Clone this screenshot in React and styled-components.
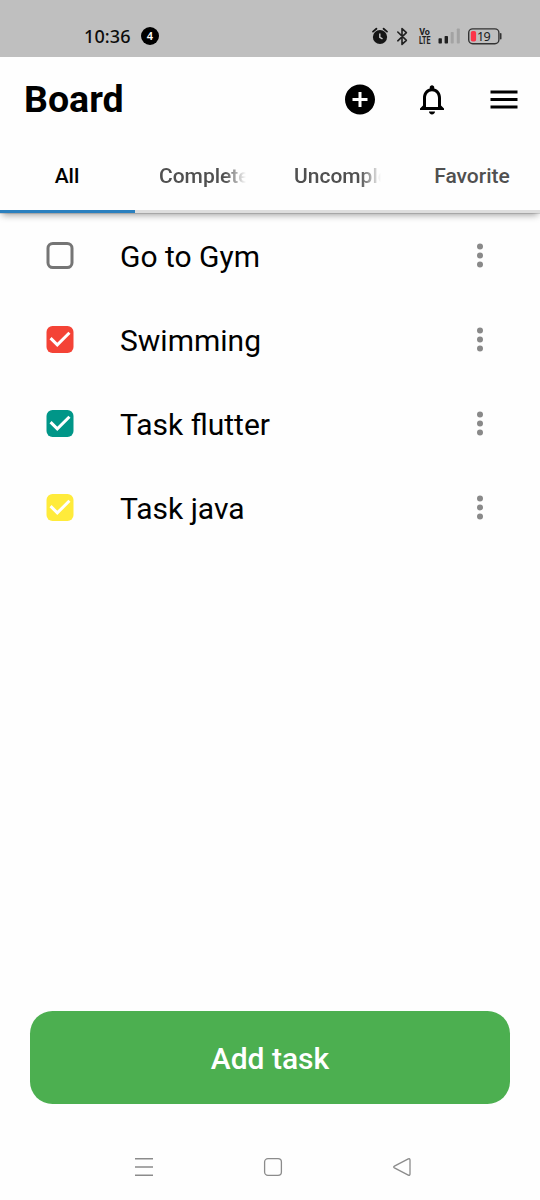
import React from "react";
import styled, { createGlobalStyle } from "styled-components";

const GlobalStyle = createGlobalStyle`
  * { box-sizing: border-box; }
  body { margin: 0; background: #fefefe; font-family: Roboto, "Liberation Sans", sans-serif; }
  button { font: inherit; border: 0; padding: 0; background: none; color: inherit; }
`;

const Screen = styled.div`
  width: 540px;
  height: 1200px;
  display: flex;
  flex-direction: column;
  background: #fefefe;
  overflow: hidden;
`;

const StatusBar = styled.div`
  height: 57px;
  flex: none;
  display: flex;
  align-items: flex-start;
  justify-content: space-between;
  padding: 24px 38px 0 84px;
  background: #bfbfbf;
  color: #0c0c0c;
`;

const StatusLeft = styled.div`
  display: flex;
  align-items: center;
  gap: 10px;
  height: 24px;
`;

const Clock = styled.span`
  font: 500 18px/24px "Noto Sans", sans-serif;
  letter-spacing: 0.1px;
  width: 47px;
  white-space: nowrap;
`;

const CountBadge = styled.span`
  width: 18px;
  height: 18px;
  border-radius: 50%;
  background: #000;
  color: #fff;
  font: 600 11px/18px "Noto Sans", sans-serif;
  text-align: center;
`;

const StatusRight = styled.svg`
  display: block;
  width: 132px;
  height: 24px;
`;

const Header = styled.header`
  flex: none;
  display: flex;
  align-items: center;
  justify-content: space-between;
  height: 84px;
  padding: 0 18px 0 24px;
`;

const Title = styled.h1`
  margin: 0;
  font-size: 37.5px;
  line-height: 44px;
  font-weight: 700;
  color: #000;
`;

const Actions = styled.div`
  display: flex;
  gap: 36px;
`;

const IconButton = styled.button`
  width: 36px;
  height: 36px;
  svg { display: block; width: 36px; height: 36px; }
`;

const Tabs = styled.nav`
  flex: none;
  display: flex;
  height: 72px;
  background: #fefefe;
  box-shadow: 0 4px 7px -2px rgba(0, 0, 0, 0.38), 0 1px 0 rgba(0, 0, 0, 0.12);
  clip-path: inset(0 0 -16px 0);
`;

const Tab = styled.button`
  width: 135px;
  height: 72px;
  padding: 1px 24px 0;
  display: flex;
  align-items: center;
  justify-content: ${(p) => (p.$fade ? "flex-start" : "center")};
  border-bottom: 3px solid ${(p) => (p.$active ? "#2b80bf" : "#dedede")};
  color: ${(p) => (p.$active ? "#000" : "#505050")};
`;

const TabLabel = styled.span`
  margin-left: ${(p) => (p.$fade ? "0" : "-1px")};
  font-size: 21px;
  line-height: 28px;
  font-weight: 500;
  white-space: nowrap;
  overflow: ${(p) => (p.$fade ? "hidden" : "visible")};
  mask-image: ${(p) => (p.$fade ? "linear-gradient(90deg, #000 66px, transparent 87px)" : "none")};
`;

const TaskList = styled.main`
  flex: 1;
`;

const TaskRow = styled.div`
  display: flex;
  align-items: center;
  height: 84px;
  padding: 0 42px;
`;

const Check = styled.span`
  flex: none;
  width: 36px;
  height: 36px;
  svg { display: block; }
`;

const TaskName = styled.span`
  flex: 1;
  margin: 3px 0 0 42px;
  font-size: 30px;
  line-height: 36px;
  color: #000;
`;

const MenuButton = styled.button`
  width: 36px;
  height: 36px;
  svg { display: block; }
`;

const AddButton = styled.button`
  flex: none;
  height: 93px;
  margin: 0 30px;
  padding-top: 2px;
  border-radius: 22.5px;
  background: #4caf50;
  color: #fff;
  font-size: 30px;
  font-weight: 500;
`;

const NavBar = styled.footer`
  flex: none;
  height: 96px;
  padding: 52px 127px 0 133px;
  display: flex;
  justify-content: space-between;
  svg { display: block; }
`;

const tasks = [
  { name: "Go to Gym" },
  { name: "Swimming", color: "#f44336" },
  { name: "Task flutter", color: "#009688" },
  { name: "Task java", color: "#ffeb3b" },
];

const tabs = [
  { label: "All", active: true },
  { label: "Completed", fade: true },
  { label: "Uncompleted", fade: true },
  { label: "Favorite" },
];

function StatusIcons() {
  return (
    <StatusRight viewBox="370 24 132 24">
      <circle cx="380" cy="37" r="7.1" fill="#161616" />
      <path d="M373 31.6l3.4-2.9M387 31.6l-3.4-2.9" stroke="#161616" strokeWidth="1.8" strokeLinecap="round" />
      <path d="M379.8 33.4v3.9l2.7 1.6" stroke="#c9c9c9" strokeWidth="1.4" fill="none" />
      <path d="M397.8 32l8.6 8.3-4.4 4.1V28.6l4.4 4.1-8.6 8.1" stroke="#202020" strokeWidth="1.6" fill="none" strokeLinejoin="round" strokeLinecap="round" />
      <g fontFamily="Roboto, sans-serif" fontWeight="700" fill="#202020">
        <text x="419.2" y="35.4" fontSize="9.4" textLength="10.7" lengthAdjust="spacingAndGlyphs">Vo</text>
        <text x="419" y="43.8" fontSize="10.4" textLength="11.5" lengthAdjust="spacingAndGlyphs">LTE</text>
      </g>
      <rect x="438.5" y="38.3" width="3.4" height="5.2" rx=".7" fill="#202020" />
      <rect x="444.6" y="36" width="3.4" height="7.5" rx=".7" fill="#202020" />
      <rect x="450.7" y="32" width="3" height="11.5" rx=".7" fill="#a3a3a3" />
      <rect x="456.8" y="28.5" width="3" height="15" rx=".7" fill="#a3a3a3" />
      <rect x="468.7" y="28.9" width="30.2" height="14.8" rx="4" fill="none" stroke="#333" strokeWidth="1.4" />
      <path d="M500.7 33.8v5" stroke="#333" strokeWidth="1.6" strokeLinecap="round" />
      <rect x="470.8" y="31" width="5.3" height="10.6" rx="1.8" fill="#fb3449" />
      <text x="477" y="40.9" fontFamily="Noto Sans, sans-serif" fontSize="12.6" fontWeight="400" fill="#202020" textLength="13.8">19</text>
    </StatusRight>
  );
}

function Checkbox({ color }) {
  return (
    <Check>
      <svg width="36" height="36" viewBox="0 -0.5 36 36">
        {color ? (
          <>
            <rect x="4.5" y="4.5" width="27" height="27" rx="6" fill={color} />
            <path d="M8.55 16.65L15.3 23.4L27.45 11.25" fill="none" stroke="#fff" strokeWidth="3" />
          </>
        ) : (
          <rect x="6" y="6" width="24" height="24" rx="4.8" fill="none" stroke="#757575" strokeWidth="3" />
        )}
      </svg>
    </Check>
  );
}

export default function App() {
  return (
    <>
      <GlobalStyle />
      <Screen>
        <StatusBar>
          <StatusLeft>
            <Clock>10:36</Clock>
            <CountBadge>4</CountBadge>
          </StatusLeft>
          <StatusIcons />
        </StatusBar>
        <Header>
          <Title>Board</Title>
          <Actions>
            <IconButton aria-label="Add">
              <svg viewBox="0 -0.333 24 24">
                <path d="M12 2C6.48 2 2 6.48 2 12s4.48 10 10 10 10-4.48 10-10S17.52 2 12 2zm5 11h-4v4h-2v-4H7v-2h4V7h2v4h4v2z" />
              </svg>
            </IconButton>
            <IconButton aria-label="Notifications">
              <svg viewBox="0 -0.333 24 24">
                <path d="M12 22c1.1 0 2-.9 2-2h-4c0 1.1.9 2 2 2zm6-6v-5c0-3.07-1.63-5.64-4.5-6.32V4c0-.83-.67-1.5-1.5-1.5s-1.5.67-1.5 1.5v.68C7.64 5.36 6 7.92 6 11v5l-2 2v1h16v-1l-2-2zm-2 1H8v-6c0-2.48 1.51-4.5 4-4.5s4 2.02 4 4.5v6z" />
              </svg>
            </IconButton>
            <IconButton aria-label="Menu">
              <svg viewBox="0 -0.333 24 24">
                <path d="M3 18h18v-2H3v2zm0-5h18v-2H3v2zm0-7v2h18V6H3z" />
              </svg>
            </IconButton>
          </Actions>
        </Header>
        <Tabs>
          {tabs.map((t) => (
            <Tab key={t.label} $active={t.active} $fade={t.fade}>
              <TabLabel $fade={t.fade}>{t.label}</TabLabel>
            </Tab>
          ))}
        </Tabs>
        <TaskList>
          {tasks.map((t) => (
            <TaskRow key={t.name}>
              <Checkbox color={t.color} />
              <TaskName>{t.name}</TaskName>
              <MenuButton aria-label="Options">
                <svg width="36" height="36" viewBox="0 -0.333 24 24" fill="#898989">
                  <circle cx="12" cy="6" r="2" />
                  <circle cx="12" cy="12" r="2" />
                  <circle cx="12" cy="18" r="2" />
                </svg>
              </MenuButton>
            </TaskRow>
          ))}
        </TaskList>
        <AddButton>Add task</AddButton>
        <NavBar>
          <svg width="22" height="22" viewBox="0 0 22 22" fill="none" stroke="#8b8b8b" strokeWidth="1.4">
            <path d="M2 2.7h18M2 11h18M2 19.2h18" />
          </svg>
          <svg width="22" height="22" viewBox="0 0 22 22" fill="none" stroke="#8b8b8b" strokeWidth="1.3">
            <rect x="2.6" y="2.6" width="16.8" height="16.8" rx="3.4" />
          </svg>
          <svg width="22" height="22" viewBox="0 0 22 22" fill="none" stroke="#8b8b8b" strokeWidth="1.3" strokeLinejoin="round">
            <path d="M3.4 10.1L17.3 2.9Q19 2.3 19 4V18Q19 19.7 17.3 19.1L3.4 11.9Q2 11 3.4 10.1Z" />
          </svg>
        </NavBar>
      </Screen>
    </>
  );
}
